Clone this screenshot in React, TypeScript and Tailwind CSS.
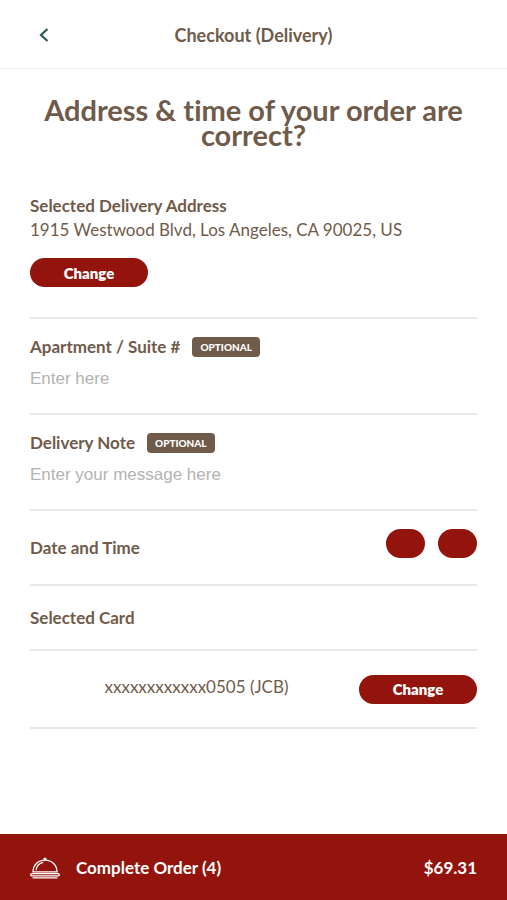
import type { ReactNode } from "react";

const CARD = "xxxxxxxxxxxx0505 (JCB)";

const FIELDS = [
  { id: "apartment", label: "Apartment / Suite #", placeholder: "Enter here" },
  { id: "note", label: "Delivery Note", placeholder: "Enter your message here" },
];

function ChangeButton() {
  return (
    <button
      type="button"
      className="h-[29px] w-[118px] shrink-0 rounded-full bg-[#92140c] text-[15px] font-extrabold leading-5 text-white"
    >
      Change
    </button>
  );
}

function Heading({ children }: { children: ReactNode }) {
  return <h2 className="text-[17px] font-bold leading-6">{children}</h2>;
}

function ClocheIcon() {
  return (
    <svg width="30" height="22" viewBox="0 0 30 22" fill="none" stroke="currentColor" strokeWidth="1.3" aria-hidden="true">
      <path d="M3 14.8C3 8.2 8 3.2 15 3.2s12 5 12 11.6z" />
      <path d="M6.2 12.5c.5-3.6 3-6.2 6.6-7.2" strokeLinecap="round" />
      <circle cx="15" cy="2" r="1.6" fill="currentColor" stroke="none" />
      <rect x="0.7" y="16.6" width="28.6" height="2.2" rx="1.1" />
      <path d="M3 20.8h24" strokeLinecap="round" />
    </svg>
  );
}

export default function App() {
  return (
    <div className="flex min-h-screen flex-col bg-white font-['Lato',sans-serif] text-[#705b4a] [font-variant-ligatures:none]">
      <header className="grid h-[69px] grid-cols-[1fr_auto_1fr] items-center border-b border-[#ebebeb] px-[30px] pt-0.5">
        <button type="button" aria-label="Back" className="flex size-7 items-center justify-center text-[#2d5752]">
          <svg width="10" height="14" viewBox="0 0 10 14" fill="none" stroke="currentColor" strokeWidth="2.2" aria-hidden="true">
            <path d="M8.5 1 2 7l6.5 6" />
          </svg>
        </button>
        <h1 className="text-lg font-bold leading-6">Checkout (Delivery)</h1>
      </header>

      <main className="flex-1 px-[30px]">
        <p className="pt-7 text-center text-[29px] font-bold leading-[25px]">
          Address &amp; time of your order are correct?
        </p>

        <section className="border-b-2 border-[#e8e8e8] pb-[30px] pt-[47px]">
          <Heading>Selected Delivery Address</Heading>
          <p className="mb-4 text-[17px] leading-6">1915 Westwood Blvd, Los Angeles, CA 90025, US</p>
          <ChangeButton />
        </section>

        {FIELDS.map((field) => (
          <section key={field.id} className="border-b-2 border-[#e8e8e8] pb-[22px] pt-4">
            <div className="flex items-center gap-3">
              <label htmlFor={field.id} className="text-[17px] font-bold leading-6">
                {field.label}
              </label>
              <span className="flex h-5 items-center rounded bg-[#705b4a] px-2 text-[10px] font-black leading-4 text-white">
                OPTIONAL
              </span>
            </div>
            <input
              id={field.id}
              type="text"
              placeholder={field.placeholder}
              className="mt-2 block h-6 w-full bg-transparent font-['Liberation_Sans',sans-serif] text-[17px] outline-none placeholder:text-[#b3b3b3]"
            />
          </section>
        ))}

        <section className="flex h-[75px] items-center justify-between border-b-2 border-[#e8e8e8]">
          <Heading>Date and Time</Heading>
          <div className="flex gap-[13px] pb-2">
            <button type="button" aria-label="Date" className="h-[29px] w-[39px] rounded-full bg-[#92140c]" />
            <button type="button" aria-label="Time" className="h-[29px] w-[39px] rounded-full bg-[#92140c]" />
          </div>
        </section>

        <section className="flex h-[65px] items-center border-b-2 border-[#e8e8e8]">
          <Heading>Selected Card</Heading>
        </section>

        <section className="flex h-[78px] items-center border-b-2 border-[#e8e8e8]">
          <p className="flex-1 pb-1 pl-1 text-center text-[17px] leading-6">{CARD}</p>
          <ChangeButton />
        </section>
      </main>

      <footer className="bg-[#92140c] text-white">
        <button type="button" className="flex h-[66px] w-full items-center px-[30px] pt-0.5 text-[17px] font-bold leading-6">
          <ClocheIcon />
          <span className="ml-4">Complete Order (4)</span>
          <span className="ml-auto">$69.31</span>
        </button>
      </footer>
    </div>
  );
}
